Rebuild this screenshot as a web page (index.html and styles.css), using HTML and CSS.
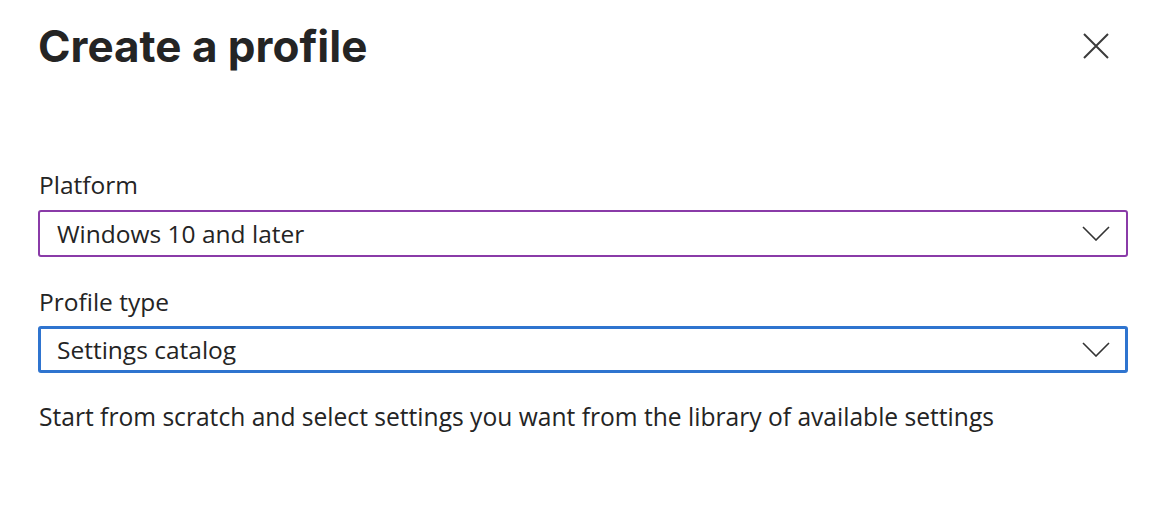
FILE: index.html
```html
<!DOCTYPE html>
<html>
<head>
<meta charset="utf-8">
<link rel="stylesheet" href="styles.css">
</head>
<body>
<div class="panel">
  <div class="header">
    <h1 class="title">Create a profile</h1>
    <button class="close" aria-label="Close">
      <svg width="26" height="26" viewBox="0 0 26 26"><path d="M1 1 L25 25 M25 1 L1 25" stroke="#3b3b3b" stroke-width="2" fill="none"/></svg>
    </button>
  </div>
  <div class="form">
    <div class="field">
      <div class="label">Platform</div>
      <div class="select select-platform">
        <span class="value">Windows 10 and later</span>
        <svg class="chev" width="28" height="15" viewBox="0 0 28 15"><path d="M1 1 L14 14 L27 1" stroke="#333" stroke-width="1.6" fill="none"/></svg>
      </div>
    </div>
    <div class="field">
      <div class="label">Profile type</div>
      <div class="select select-type">
        <span class="value">Settings catalog</span>
        <svg class="chev" width="28" height="15" viewBox="0 0 28 15"><path d="M1 1 L14 14 L27 1" stroke="#333" stroke-width="1.6" fill="none"/></svg>
      </div>
    </div>
    <p class="desc">Start from scratch and select settings you want from the library of available settings</p>
  </div>
</div>
</body>
</html>
```
FILE: styles.css
```css
html, body {
  margin: 0;
  padding: 0;
  background: #ffffff;
}
body {
  font-family: "Open Sans", "Noto Sans", sans-serif;
  color: #242424;
}
.panel {
  padding: 0 32px 0 38px;
}
.header {
  display: flex;
  justify-content: space-between;
  align-items: flex-start;
  height: 110px;
}
.title {
  margin: 0;
  padding-top: 17px;
  font-family: "Inter", "Liberation Sans", sans-serif;
  font-weight: 700;
  font-size: 44px;
  line-height: 58px;
  letter-spacing: 0;
  color: #242424;
}
.close {
  border: none;
  background: none;
  padding: 0;
  margin-top: 33px;
  margin-right: 19px;
  width: 26px;
  height: 26px;
  display: flex;
}
.form {
  padding-top: 60px;
}
.field {
  display: flex;
  flex-direction: column;
}
.field + .field {
  margin-top: 30px;
}
.label {
  font-size: 24.5px;
  line-height: 30px;
  margin-bottom: 9px;
  padding-left: 1px;
}
.field:first-child .label {
  margin-bottom: 10px;
}
.select {
  box-sizing: border-box;
  height: 47px;
  border-radius: 3px;
  display: flex;
  align-items: center;
  justify-content: space-between;
  padding: 0 16px 0 17px;
}
.select-platform {
  border: 2px solid #8a3ba8;
}
.select-type {
  border: 3px solid #2f74cf;
  padding-left: 16px;
  padding-right: 15px;
}
.value {
  font-size: 24.5px;
  line-height: 30px;
}
.chev {
  display: block;
}
.desc {
  margin: 29px 0 0 1px;
  font-size: 24.6px;
  line-height: 30px;
}
```
